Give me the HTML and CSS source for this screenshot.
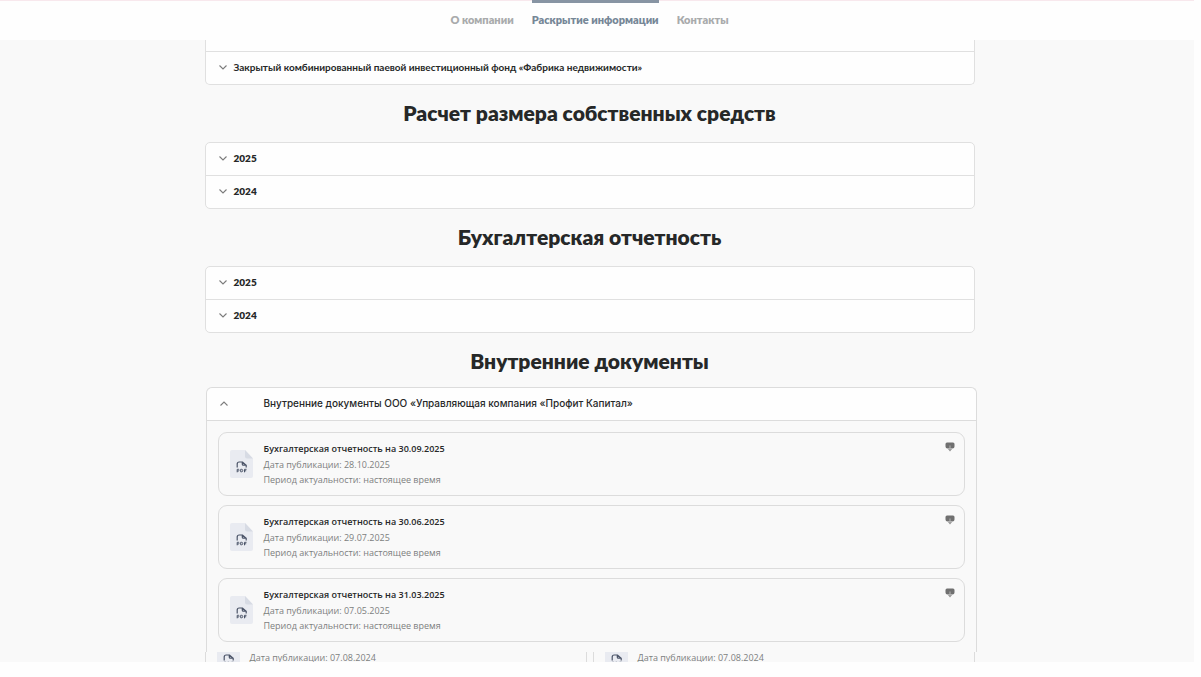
FILE: index.html
```html
<!DOCTYPE html>
<html lang="ru">
<head>
    <meta charset="UTF-8">
    <meta name="viewport" content="width=device-width, initial-scale=1.0">
    <title>Раскрытие информации</title>
    <link rel="stylesheet" href="styles.css">
</head>
<body>
    <svg class="sprite" aria-hidden="true">
        <symbol id="icon-chevron" viewBox="0 0 8 5">
            <path d="M0.5 0.5 L4 4 L7.5 0.5" fill="none" stroke="#7c7c7c" stroke-width="1.1"/>
        </symbol>
        <symbol id="icon-file" viewBox="0 0 23 28">
            <path d="M2 0 H15 L23 8.500 V26 A2 2 0 0 1 21 28 H2 A2 2 0 0 1 0 26 V2 A2 2 0 0 1 2 0 Z" fill="#e9ebf1"/>
            <path d="M15 0 L23 8.500 H17 A2 2 0 0 1 15 6.500 Z" fill="#d7dbe4"/>
            <path d="M7.200 17.500 V14 A2 2 0 0 1 9.200 12 H12.500 L16.200 15.200 V17.500 M12.300 12.300 V14.200 A1 1 0 0 0 13.300 15.200 H15.800" fill="none" stroke="#4b5468" stroke-width="1.200"/>
            <path d="M7.200 22.300 V19.300 H8.500 A0.900 0.900 0 0 1 8.500 21 H7.200 M10.700 19.300 V21.800 H11.500 A1.200 1.200 0 0 0 11.500 19.300 Z M14.500 22.300 V19.300 H16.500 M14.500 20.800 H16.200" fill="none" stroke="#4b5468" stroke-width="1"/>
        </symbol>
        <symbol id="icon-download" viewBox="0 0 10 10">
            <path d="M2 0.500 H8 A1.500 1.500 0 0 1 9.500 2 V4.500 A2 2 0 0 1 7.500 6.500 H2.500 A2 2 0 0 1 0.500 4.500 V2 A1.500 1.500 0 0 1 2 0.500 Z" fill="#707070"/>
            <path d="M3 7 H7 L5 9.500 Z" fill="#8c8c8c"/>
            <path d="M5 3.500 V8" stroke="#b4b4b4" stroke-width="1"/>
        </symbol>
    </svg>

    <header class="header">
        <nav class="nav">
            <a class="nav-link" href="#about">О компании</a>
            <a class="nav-link active" href="#disclosure">Раскрытие информации</a>
            <a class="nav-link" href="#contacts">Контакты</a>
        </nav>
    </header>

    <main class="page">
        <div class="container">
            <div class="accordion accordion-tail">
                <button class="accordion-item" type="button"><svg class="chevron"><use href="#icon-chevron"/></svg>Закрытый комбинированный паевой инвестиционный фонд «Фабрика недвижимости»</button>
            </div>

            <h2>Расчет размера собственных средств</h2>
            <div class="accordion">
                <button class="accordion-item" type="button"><svg class="chevron"><use href="#icon-chevron"/></svg>2025</button>
                <button class="accordion-item" type="button"><svg class="chevron"><use href="#icon-chevron"/></svg>2024</button>
            </div>

            <h2>Бухгалтерская отчетность</h2>
            <div class="accordion">
                <button class="accordion-item" type="button"><svg class="chevron"><use href="#icon-chevron"/></svg>2025</button>
                <button class="accordion-item" type="button"><svg class="chevron"><use href="#icon-chevron"/></svg>2024</button>
            </div>

            <h2 class="docs-heading">Внутренние документы</h2>
            <section class="docs">
                <button class="docs-toggle" type="button" aria-expanded="true">
                    <svg class="chevron up"><use href="#icon-chevron"/></svg>
                    <span>Внутренние документы ООО «Управляющая компания «Профит Капитал»</span>
                </button>
                <div class="docs-list">
                    <article class="doc">
                        <svg class="file-icon"><use href="#icon-file"/></svg>
                        <div class="doc-text">
                            <h3>Бухгалтерская отчетность на 30.09.2025</h3>
                            <p>Дата публикации: 28.10.2025</p>
                            <p>Период актуальности: настоящее время</p>
                        </div>
                        <a class="download" href="#download-1" aria-label="Скачать"><svg><use href="#icon-download"/></svg></a>
                    </article>
                    <article class="doc">
                        <svg class="file-icon"><use href="#icon-file"/></svg>
                        <div class="doc-text">
                            <h3>Бухгалтерская отчетность на 30.06.2025</h3>
                            <p>Дата публикации: 29.07.2025</p>
                            <p>Период актуальности: настоящее время</p>
                        </div>
                        <a class="download" href="#download-2" aria-label="Скачать"><svg><use href="#icon-download"/></svg></a>
                    </article>
                    <article class="doc">
                        <svg class="file-icon"><use href="#icon-file"/></svg>
                        <div class="doc-text">
                            <h3>Бухгалтерская отчетность на 31.03.2025</h3>
                            <p>Дата публикации: 07.05.2025</p>
                            <p>Период актуальности: настоящее время</p>
                        </div>
                        <a class="download" href="#download-3" aria-label="Скачать"><svg><use href="#icon-download"/></svg></a>
                    </article>
                </div>
            </section>

            <div class="archive">
                <div class="archive-item">
                    <svg class="file-icon"><use href="#icon-file"/></svg>
                    <p>Дата публикации: 07.08.2024</p>
                </div>
                <div class="archive-item">
                    <svg class="file-icon"><use href="#icon-file"/></svg>
                    <p>Дата публикации: 07.08.2024</p>
                </div>
            </div>
        </div>
    </main>
</body>
</html>
```
FILE: styles.css
```css
* {
    box-sizing: border-box;
}
body {
    margin: 0;
    padding-right: 7px;
    background-color: #fefefe;
    color: #262828;
    font-family: Lato, "Open Sans", sans-serif;
}
h2, h3, p {
    margin: 0;
}
button {
    font-family: inherit;
    color: inherit;
    text-align: left;
    cursor: pointer;
}
.sprite {
    display: none;
}
.header {
    height: 40px;
    padding-right: 15px;
    border-top: 1px solid #f8e8ed;
}
.nav {
    display: flex;
    justify-content: center;
    gap: 18px;
    margin-top: -1px;
}
.nav-link {
    padding-top: 9px;
    border-top: 3px solid transparent;
    color: #a9abac;
    font-size: 11px;
    font-weight: 800;
    line-height: 16px;
    text-decoration: none;
}
.nav-link.active {
    border-top-color: #8794a3;
    color: #768797;
}
.page {
    padding-right: 15px;
    background-color: #f9f9f9;
}
.container {
    max-width: 770px;
    margin: 0 auto;
}
.accordion {
    border: 1px solid #e0e0e0;
    border-radius: 5px;
    background-color: #fefefe;
    overflow: hidden;
}
.accordion-tail {
    padding-top: 11px;
    border-top: none;
    border-radius: 0 0 5px 5px;
}
.accordion-item {
    display: flex;
    align-items: center;
    gap: 7px;
    width: 100%;
    height: 32px;
    padding: 0 13px 2px;
    border: none;
    background: none;
    font-size: 10px;
    font-weight: 800;
}
.accordion-item + .accordion-item,
.accordion-tail .accordion-item {
    height: 33px;
    border-top: 1px solid #e0e0e0;
}
.accordion-tail .accordion-item {
    font-weight: 700;
}
.chevron {
    flex: none;
    width: 8px;
    height: 5px;
}
.chevron.up {
    transform: rotate(180deg);
}
h2 {
    padding: 12px 0 13px;
    font-size: 21px;
    font-weight: 800;
    line-height: 32px;
    text-align: center;
}
.docs-heading {
    padding-bottom: 10px;
}
.docs {
    margin: 0 -2px 0 1px;
    border: 1px solid #dcdcdc;
    border-bottom: none;
    border-radius: 6px 6px 0 0;
}
.docs-toggle {
    display: flex;
    align-items: center;
    gap: 36px;
    width: 100%;
    height: 33px;
    padding: 0 13px 2px;
    border: none;
    border-bottom: 1px solid #dcdcdc;
    border-radius: 6px 6px 0 0;
    background-color: #fefefe;
    font-family: Inter, sans-serif;
    font-size: 10px;
    font-weight: 500;
}
.docs-list {
    display: flex;
    flex-direction: column;
    gap: 9px;
    padding: 11px 11px 10px;
}
.doc {
    display: flex;
    align-items: center;
    height: 64px;
    padding: 0 9px 0 11px;
    border: 1px solid #dcdcdc;
    border-radius: 9px;
}
.file-icon {
    flex: none;
    width: 23px;
    height: 28px;
}
.doc-text {
    flex: 1;
    margin-left: 11px;
    padding-bottom: 1px;
}
.doc h3,
.doc p,
.archive p {
    font-family: "Open Sans", sans-serif;
    font-size: 9px;
}
.doc h3 {
    font-weight: 600;
    line-height: 16px;
}
.doc p,
.archive p {
    color: #7d7f80;
    line-height: 15px;
}
.download {
    align-self: flex-start;
    padding-top: 9px;
}
.download svg {
    display: block;
    width: 10px;
    height: 10px;
}
.archive {
    display: grid;
    grid-template-columns: 1fr 1fr;
    gap: 6px;
    height: 10px;
    overflow: hidden;
}
.archive-item {
    display: flex;
    align-items: center;
    gap: 10px;
    height: 10px;
    padding-left: 11px;
    border: 1px solid #dcdcdc;
    border-width: 0 1px;
}
```
